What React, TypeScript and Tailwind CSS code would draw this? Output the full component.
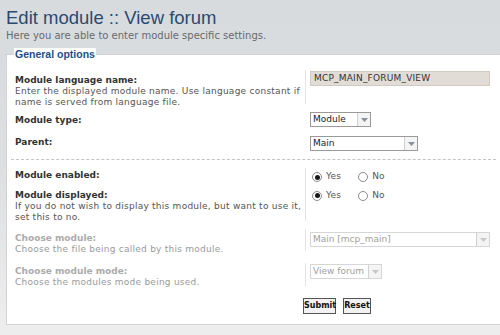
import React from 'react';

const font = 'font-["DejaVu_Sans",Verdana,sans-serif]';

function Select({ value, width, disabled }: { value: string; width: string; disabled?: boolean }) {
  return (
    <div
      className={`flex h-[15px] items-stretch border bg-white text-[9px] leading-[13px] ${width} ${
        disabled ? 'border-[#d6d6d6] text-[#a0a0a0]' : 'border-[#9a9a9a] text-[#222]'
      }`}
    >
      <span className="flex-1 truncate pl-[2px]">{value}</span>
      <span className="flex w-[13px] items-center justify-center border-l border-[#d0d0d0] bg-[#f4f4f4]">
        <svg width="7" height="4" viewBox="0 0 7 4">
          <path d="M0 0h7L3.5 4z" fill={disabled ? '#c8c8c8' : '#8a9099'} />
        </svg>
      </span>
    </div>
  );
}

function Radio({ label, checked }: { label: string; checked?: boolean }) {
  return (
    <span className="flex items-center gap-[4px]">
      <span className="flex h-[10px] w-[10px] items-center justify-center rounded-full border border-[#8c8c8c] bg-white">
        {checked && <span className="h-[5px] w-[5px] rounded-full bg-[#1a1a1a]" />}
      </span>
      <span className="text-[9px] tracking-[0.2px] text-[#555]">{label}</span>
    </span>
  );
}

function Label({ title, desc, muted }: { title: string; desc?: string[]; muted?: boolean }) {
  return (
    <>
      <div className={`text-[9px] font-bold leading-[11px] ${muted ? 'text-[#ababab]' : 'text-[#333]'}`}>{title}</div>
      {desc?.map((d) => (
        <div
          key={d}
          className={`text-[9px] leading-[11px] tracking-[0.25px] ${muted ? 'text-[#9a9a9a]' : 'text-[#555]'}`}
        >
          {d}
        </div>
      ))}
    </>
  );
}

export default function App() {
  return (
    <div className={`h-[335px] w-[500px] overflow-hidden bg-gradient-to-b from-[#d7dbde] via-[#dedfe1] to-[#eeeeee] ${font}`}>
      <div className="pl-[6px] pt-[6px]">
        <h1 className='font-["Liberation_Sans",Arial,sans-serif] text-[18.5px] leading-[24px] text-[#2a4a70]'>
          Edit module :: View forum
        </h1>
        <p className="mt-[0px] text-[10px] leading-[12px] text-[#6a6a6a]">
          Here you are able to enter module specific settings.
        </p>
      </div>

      <div className="relative ml-[6px] mt-[12px] h-[271px] border-b border-l border-t border-[#d2d2d2] bg-white">
        <div className='absolute left-[7px] top-[-7px] bg-white px-[1px] font-["Liberation_Sans",Arial,sans-serif] text-[10.5px] font-bold leading-[12px] text-[#1c4f86]'>
          General options
        </div>

        <div className="pt-[12px]">
          {/* language name */}
          <div className="flex h-[40px]">
            <div className="w-[298px] pl-[8px] pt-[8px]">
              <Label
                title="Module language name:"
                desc={['Enter the displayed module name. Use language constant if', 'name is served from language file.']}
              />
            </div>
            <div className="mt-[3px] h-[34px] border-l border-[#e4e4e4] pl-[4px] pt-[1px]">
              <div className="h-[15px] w-[180px] border border-[#cfcbc4] bg-[#e1ddd6] pl-[3px] text-[9px] leading-[13px] tracking-[0.2px] text-[#333]">
                MCP_MAIN_FORUM_VIEW
              </div>
            </div>
          </div>

          {/* type */}
          <div className="flex h-[24px]">
            <div className="w-[298px] pl-[8px] pt-[8px]">
              <Label title="Module type:" />
            </div>
            <div className="pl-[5px] pt-[5px]">
              <Select value="Module" width="w-[61px]" />
            </div>
          </div>

          {/* parent */}
          <div className="flex h-[23px]">
            <div className="w-[298px] pl-[8px] pt-[6px]">
              <Label title="Parent:" />
            </div>
            <div className="pl-[5px] pt-[5px]">
              <Select value="Main" width="w-[108px]" />
            </div>
          </div>

          <div className="mx-[4px] mt-[5px] border-t border-dashed border-[#c4c4c4]" />

          {/* enabled */}
          <div className="flex h-[25px]">
            <div className="w-[298px] pl-[8px] pt-[10px]">
              <Label title="Module enabled:" />
            </div>
            <div className="mt-[8px] flex h-[17px] gap-[17px] border-l border-[#e4e4e4] pl-[6px] pt-[1px]">
              <Radio label="Yes" checked />
              <Radio label="No" />
            </div>
          </div>

          {/* displayed */}
          <div className="flex h-[42px]">
            <div className="w-[298px] pl-[8px] pt-[5px]">
              <Label
                title="Module displayed:"
                desc={['If you do not wish to display this module, but want to use it,', 'set this to no.']}
              />
            </div>
            <div className="h-[36px] border-l border-[#e4e4e4] pl-[6px] pt-[4px]">
              <div className="flex h-[13px] gap-[17px]">
                <Radio label="Yes" checked />
                <Radio label="No" />
              </div>
            </div>
          </div>

          {/* choose module */}
          <div className="flex h-[30px]">
            <div className="w-[298px] pl-[8px] pt-[6px]">
              <Label muted title="Choose module:" desc={['Choose the file being called by this module.']} />
            </div>
            <div className="mt-[2px] h-[22px] border-l border-[#e4e4e4] pl-[4px] pt-[3px]">
              <Select disabled value="Main [mcp_main]" width="w-[180px]" />
            </div>
          </div>

          {/* mode */}
          <div className="flex h-[34px]">
            <div className="w-[298px] pl-[8px] pt-[9px]">
              <Label muted title="Choose module mode:" desc={['Choose the modules mode being used.']} />
            </div>
            <div className="mt-[6px] h-[23px] border-l border-[#e4e4e4] pl-[4px] pt-[1px]">
              <Select disabled value="View forum" width="w-[72px]" />
            </div>
          </div>

          <div className="mt-[7px] flex gap-[7px] pl-[296px]">
            <button className="h-[16px] w-[33px] border border-[#555] bg-[#f2f2f2] text-[8px] font-bold leading-[14px] text-[#111]">
              Submit
            </button>
            <button className="h-[16px] w-[28px] border border-[#555] bg-[#f2f2f2] text-[8px] font-bold leading-[14px] text-[#111]">
              Reset
            </button>
          </div>
        </div>
      </div>
    </div>
  );
}
